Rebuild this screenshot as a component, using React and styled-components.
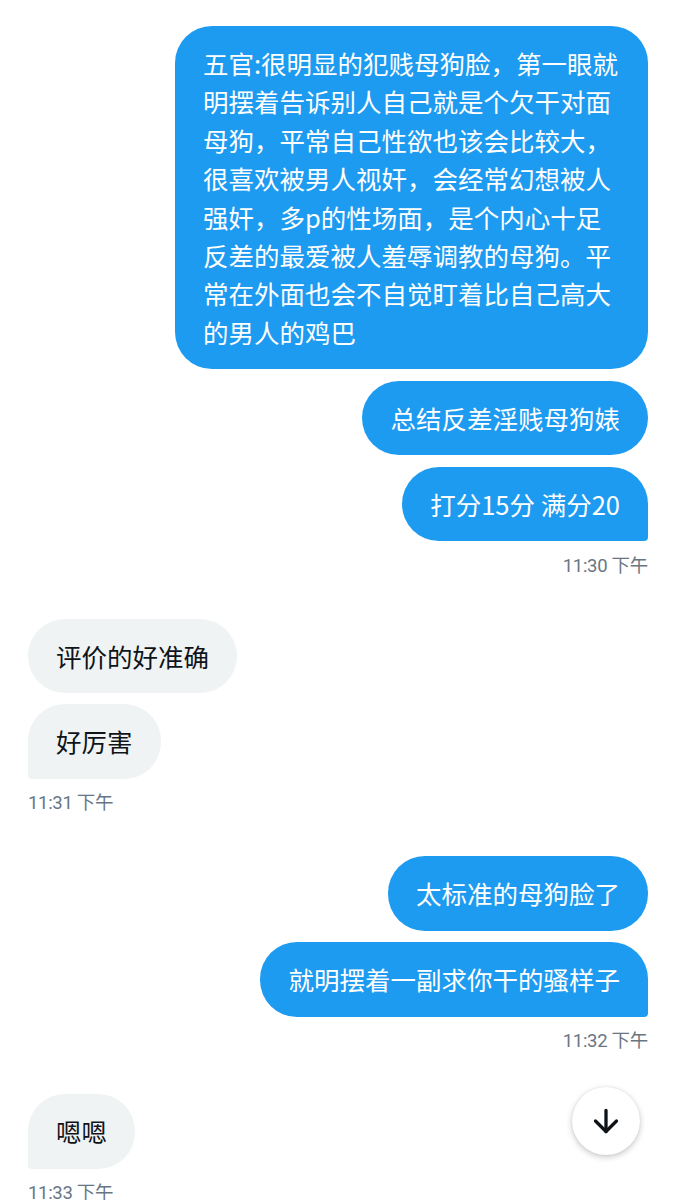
import React from "react";
import styled, { createGlobalStyle } from "styled-components";
import { ArrowDown } from "lucide-react";

const GlobalStyle = createGlobalStyle`
  html, body {
    margin: 0;
    padding: 0;
    background: #ffffff;
  }
  body {
    font-family: "Noto Sans", "Noto Sans CJK SC", sans-serif;
    -webkit-font-smoothing: antialiased;
  }
`;

const Screen = styled.div`
  position: relative;
  width: 676px;
  height: 1200px;
  overflow: hidden;
  background: #ffffff;
`;

const Thread = styled.div`
  display: flex;
  flex-direction: column;
  gap: 42px;
  padding: 26px 28px 0 28px;
`;

const Group = styled.div`
  display: flex;
  flex-direction: column;
  align-items: ${(p) => (p.$mine ? "flex-end" : "flex-start")};
  gap: 11.5px;
`;

const Bubble = styled.div`
  max-width: 473px;
  box-sizing: border-box;
  padding: 18px 28px;
  border-radius: 37px;
  font-family: "Noto Sans CJK SC", "Noto Sans", sans-serif;
  font-size: 25.5px;
  line-height: 38.4px;
  word-break: break-all;
  background: ${(p) => (p.$mine ? "#1d9bf0" : "#eff3f4")};
  color: ${(p) => (p.$mine ? "#ffffff" : "#0f1419")};
  ${(p) =>
    p.$last &&
    (p.$mine ? "border-bottom-right-radius: 4px;" : "border-bottom-left-radius: 4px;")}
`;

const Stamp = styled.div`
  margin-top: 2px;
  font-family: "Roboto", "Noto Sans CJK SC", sans-serif;
  font-size: 18.5px;
  line-height: 22px;
  color: #687684;
  letter-spacing: -0.3px;
`;

const ScrollButton = styled.button`
  position: absolute;
  right: 36px;
  top: 1087px;
  width: 68px;
  height: 68px;
  border: none;
  border-radius: 50%;
  background: #ffffff;
  box-shadow: 0 2px 6px rgba(0, 0, 0, 0.22), 0 0 2px rgba(0, 0, 0, 0.08);
  display: flex;
  align-items: center;
  justify-content: center;
  color: #0f1419;
  padding: 0;
`;

const groups = [
  {
    mine: true,
    time: "11:30 下午",
    messages: [
      "五官:很明显的犯贱母狗脸，第一眼就明摆着告诉别人自己就是个欠干对面母狗，平常自己性欲也该会比较大，很喜欢被男人视奸，会经常幻想被人强奸，多p的性场面，是个内心十足反差的最爱被人羞辱调教的母狗。平常在外面也会不自觉盯着比自己高大的男人的鸡巴",
      "总结反差淫贱母狗婊",
      "打分15分 满分20",
    ],
  },
  {
    mine: false,
    time: "11:31 下午",
    messages: ["评价的好准确", "好厉害"],
  },
  {
    mine: true,
    time: "11:32 下午",
    messages: ["太标准的母狗脸了", "就明摆着一副求你干的骚样子"],
  },
  {
    mine: false,
    time: "11:33 下午",
    messages: ["嗯嗯"],
  },
];

const App = () => {
  return (
    <>
      <GlobalStyle />
      <Screen>
        <Thread>
          {groups.map((g, gi) => (
            <Group key={gi} $mine={g.mine}>
              {g.messages.map((m, mi) => (
                <Bubble
                  key={mi}
                  $mine={g.mine}
                  $last={mi === g.messages.length - 1}
                >
                  {m}
                </Bubble>
              ))}
              <Stamp>{g.time}</Stamp>
            </Group>
          ))}
        </Thread>
        <ScrollButton aria-label="scroll down">
          <ArrowDown size={36} strokeWidth={2.2} />
        </ScrollButton>
      </Screen>
    </>
  );
};

export default App;
